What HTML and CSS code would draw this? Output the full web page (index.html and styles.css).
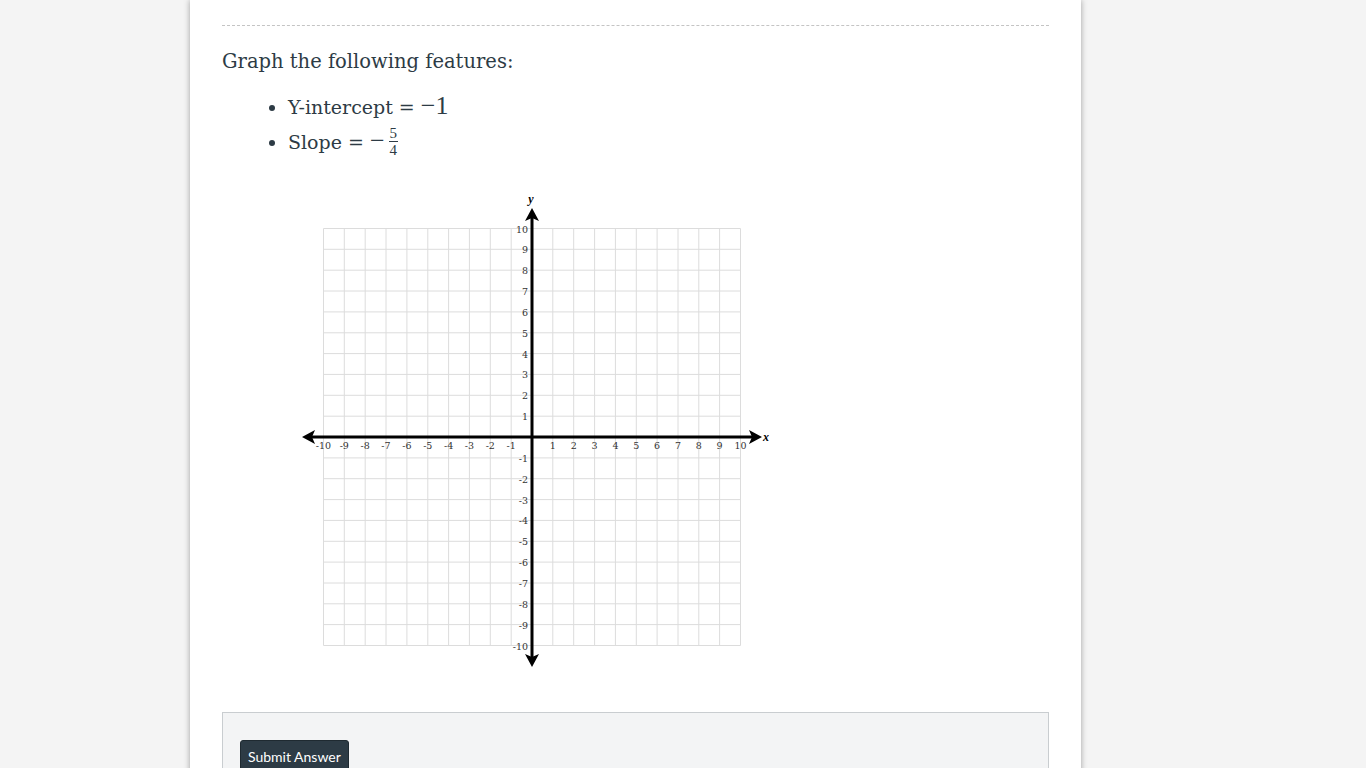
FILE: index.html
```html
<!DOCTYPE html>
<html>
<head>
<meta charset="utf-8">
<link rel="stylesheet" href="styles.css">
</head>
<body>
<div class="panel">
  <div class="rule"></div>
  <p class="prompt">Graph the following features:</p>
  <ul class="features">
    <li>Y-intercept = <span class="math">−1</span></li>
    <li>Slope = <span class="math">−</span><span class="frac"><span class="num">5</span><span class="den">4</span></span></li>
  </ul>
  <div class="graph">
    <svg width="480" height="482" viewBox="0 0 480 482" xmlns="http://www.w3.org/2000/svg">
      <g id="grid" stroke="#dcdcdc" stroke-width="1"></g>
      <g id="labels" font-family="DejaVu Serif, Liberation Serif, serif" font-size="9.5" fill="#333"></g>
      <line x1="12" y1="247" x2="456" y2="247" stroke="#000" stroke-width="3"/>
      <line x1="232" y1="26" x2="232" y2="470" stroke="#000" stroke-width="3"/>
      <path d="M2 247 L15 240 L12 247 L15 254 Z" fill="#000"/>
      <path d="M462 247 L449 240 L452 247 L449 254 Z" fill="#000"/>
      <path d="M232 18 L225 31 L232 28 L239 31 Z" fill="#000"/>
      <path d="M232 477 L225 464 L232 467 L239 464 Z" fill="#000"/>
      <text x="231" y="13" font-family="Liberation Serif, serif" font-style="italic" font-weight="bold" font-size="12" text-anchor="middle">y</text>
      <text x="463" y="251" font-family="Liberation Serif, serif" font-style="italic" font-weight="bold" font-size="12">x</text>
    </svg>
  </div>
  <div class="actions">
    <button class="submit">Submit Answer</button>
  </div>
</div>
<script src="graph.js"></script>
</body>
</html>
```

FILE: graph.js
```js
(function(){
  var ns = "http://www.w3.org/2000/svg";
  var grid = document.getElementById("grid");
  var labels = document.getElementById("labels");
  var ox = 232, oy = 247, u = 20.85;
  for (var i = -10; i <= 10; i++) {
    var x = ox + i * u, y = oy - i * u;
    var v = document.createElementNS(ns, "line");
    v.setAttribute("x1", x.toFixed(1)); v.setAttribute("x2", x.toFixed(1));
    v.setAttribute("y1", (oy - 10 * u).toFixed(1)); v.setAttribute("y2", (oy + 10 * u).toFixed(1));
    grid.appendChild(v);
    var h = document.createElementNS(ns, "line");
    h.setAttribute("y1", y.toFixed(1)); h.setAttribute("y2", y.toFixed(1));
    h.setAttribute("x1", (ox - 10 * u).toFixed(1)); h.setAttribute("x2", (ox + 10 * u).toFixed(1));
    grid.appendChild(h);
    if (i === 0) continue;
    var tx = document.createElementNS(ns, "text");
    tx.setAttribute("x", x.toFixed(1));
    tx.setAttribute("y", oy + 12);
    tx.setAttribute("text-anchor", "middle");
    tx.textContent = String(i);
    labels.appendChild(tx);
    var ty = document.createElementNS(ns, "text");
    ty.setAttribute("x", ox - 4);
    ty.setAttribute("y", (y + 4).toFixed(1));
    ty.setAttribute("text-anchor", "end");
    ty.textContent = String(i);
    labels.appendChild(ty);
  }
})();
```

FILE: styles.css
```css
html, body {
  margin: 0;
  padding: 0;
}
body {
  background: #f4f4f4;
  width: 1366px;
  height: 768px;
  overflow: hidden;
  font-family: "DejaVu Serif", Georgia, "Liberation Serif", serif;
  color: #2d3b45;
}
.panel {
  margin-left: 190px;
  width: 891px;
  box-sizing: border-box;
  padding: 25px 32px 0 32px;
  background: #fff;
  min-height: 768px;
  box-shadow: 0 0 6px rgba(0,0,0,0.35);
}
.rule {
  border-top: 1px dashed #c4c4c4;
  width: 827px;
}
.prompt {
  margin: 21px 0 0 0;
  font-size: 19.5px;
  line-height: 30px;
}
.features {
  margin: 12px 0 0 0;
  padding-left: 66px;
  font-size: 19px;
  line-height: 34px;
}
.math {
  font-family: "Liberation Serif", "DejaVu Serif", serif;
  font-size: 26px;
}
.frac {
  display: inline-flex;
  flex-direction: column;
  align-items: center;
  vertical-align: middle;
  font-family: "Liberation Serif", serif;
  font-size: 15px;
  line-height: 16px;
  margin-left: 4px;
  position: relative;
  top: -3px;
}
.frac .num {
  border-bottom: 1px solid #2d3b45;
  padding: 0 1px;
}
.graph {
  margin: 29px 0 0 78px;
  height: 482px;
}
.graph svg {
  display: block;
}
.actions {
  margin-top: 40px;
  width: 827px;
  box-sizing: border-box;
  background: #f3f4f5;
  border: 1px solid #c9cdd0;
  padding: 27px 17px 20px;
}
.submit {
  font-family: Lato, "Liberation Sans", sans-serif;
  font-size: 14px;
  color: #fff;
  background: #2d3b45;
  border: 1px solid #1f2a31;
  border-radius: 3px;
  padding: 7px 7px;
  cursor: pointer;
}
```
